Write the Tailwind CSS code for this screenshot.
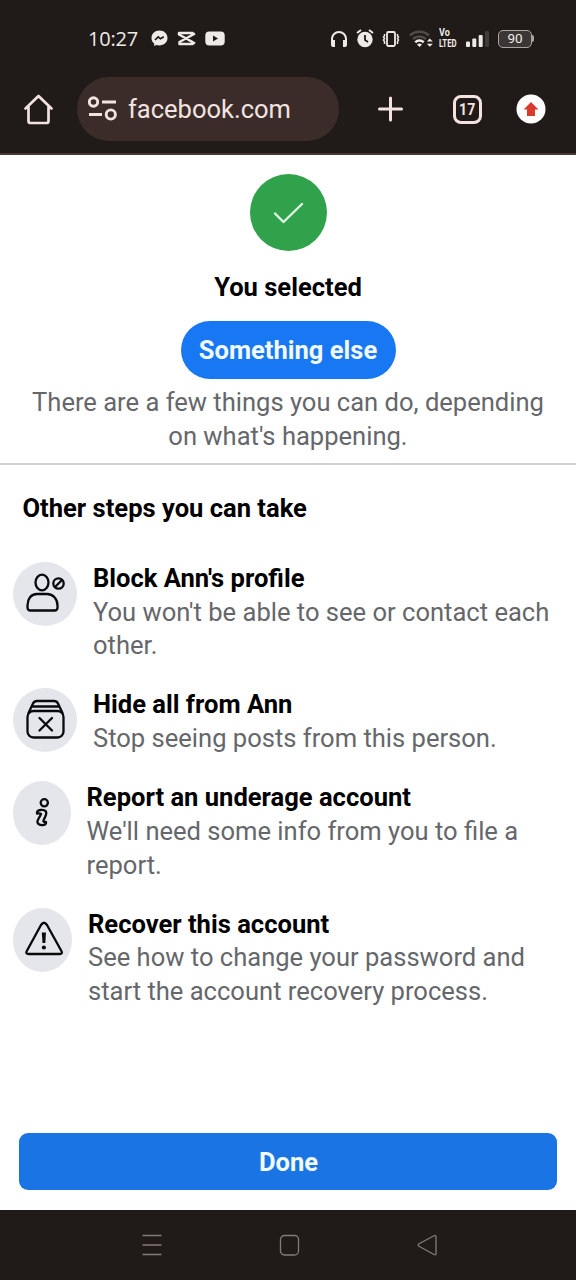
<!DOCTYPE html>
<html lang="en">
<head>
<meta charset="utf-8">
<meta name="viewport" content="width=device-width, initial-scale=1">
<title>facebook.com</title>
<script src="https://cdn.jsdelivr.net/npm/@tailwindcss/browser@4"></script>
</head>
<body class="w-[576px] h-[1280px] overflow-hidden bg-white font-['Roboto',sans-serif] flex flex-col whitespace-nowrap">
<header class="h-[155px] shrink-0 bg-[#201b18] border-b-2 border-[#443836] flex flex-col">
  <!-- Status bar -->
  <div class="h-[77px] shrink-0 flex items-center text-[#eeeae8] pl-[88px]">
    <span class="w-[63px] font-['Open_Sans'] text-[20px] leading-6 tracking-[-0.2px]">10:27</span>
    <svg class="w-[17px] h-[17px]" viewBox="0 0 17 17"><path d="M8.500.5C3.800.5.5 3.800.5 8c0 2.400 1 4.300 2.700 5.600V16l2.300-1c5.800 1.700 11-1.900 11-7C16.500 3.800 13.200.5 8.500.5Z" fill="currentColor"/><path d="m4 10 3.200-3.200 2.300 2 3.300-2" fill="none" stroke="#201b18" stroke-width="1.700"/></svg>
    <svg class="ml-[9px] w-[19px] h-[15px]" viewBox="0 0 19 15" fill="none" stroke="currentColor" stroke-width="2.500"><path d="M18 2.500 2.500 11v2h13v-2L2 3.500V2h13.500v1.500M18 12.500 10 8" stroke-linejoin="round"/></svg>
    <svg class="ml-[9px] w-[20px] h-[15px]" viewBox="0 0 20 15"><rect x=".3" y=".5" width="19.400" height="14" rx="4" fill="currentColor"/><path d="m8 4.600 5 2.900-5 2.900Z" fill="#201b18"/></svg>
    <svg class="ml-[105px] w-[18px] h-[18px]" viewBox="0 0 18 18"><path d="M2 13V9a7 7 0 0 1 14 0v4" fill="none" stroke="currentColor" stroke-width="2"/><path d="M1 10h4v7H3a2 2 0 0 1-2-2ZM13 10h4v5a2 2 0 0 1-2 2h-2Z" fill="currentColor"/></svg>
    <svg class="ml-[8px] w-[18px] h-[19px]" viewBox="0 0 18 19" fill="none" stroke="currentColor"><circle cx="9" cy="10.500" r="7.700" fill="currentColor" stroke="none"/><path d="m1 4 4-3M17 4l-4-3" stroke-width="2"/><path d="M9 6v5l3 2" stroke="#201b18" stroke-width="1.800"/></svg>
    <svg class="ml-[8px] w-[18px] h-[18px]" viewBox="0 0 18 18" fill="none" stroke="currentColor" stroke-width="1.800"><rect x="5" y="2" width="8" height="14" rx="1.500"/><path d="M2.500 4v2l-1 1 1 1.500-1 1.500 1 1.500v2.500M15.500 4v2l1 1-1 1.500 1 1.500-1 1.500v2.500" stroke-width="1.500"/></svg>
    <svg class="ml-[9px] w-[24px] h-[18px]" viewBox="0 0 24 18" fill="none" stroke-width="2.500"><path d="M1 5.500a14 14 0 0 1 19 0M4 9a9.600 9.600 0 0 1 13 0" stroke="#514b48"/><path d="M6.300 12.300a6 6 0 0 1 8.400 0" stroke="currentColor"/><path d="m8 14.500 2.500 2.500 2.500-2.500a4 4 0 0 0-5 0ZM17.800 11.500l3-3 3 3ZM17.800 13.800h6l-3 3Z" fill="currentColor"/></svg>
    <div class="ml-[6px] w-[20px] h-[20px] font-bold text-[10px] leading-[10px]"><div class="w-[12px] -mt-[1px] origin-left scale-x-[0.900]">Vo</div><div class="mt-[1px] w-[24px] origin-left scale-x-[0.780]">LTED</div></div>
    <svg class="ml-[7px] w-[24px] h-[18px]" viewBox="0 0 24 18" fill="currentColor"><rect x="0" y="11.500" width="4" height="5.500" rx="1"/><rect x="6.300" y="8.500" width="4" height="8.500" rx="1"/><rect x="12.700" y="5" width="4" height="12" rx="1"/><rect x="19" y="1" width="4" height="16" rx="1" fill="#423c39"/></svg>
    <div class="ml-[8px] w-[34px] h-[18px] rounded-[5px] border-[1.500px] border-[#aaa3a2] bg-[#3c3635] flex items-center justify-center text-[13.500px]">90</div>
    <i class="w-[2px] h-[7px] bg-[#aaa3a2] rounded-r"></i>
  </div>
  <!-- Browser toolbar -->
  <div class="h-[64px] flex items-center text-[#f3e3e0]">
    <svg class="ml-[23px] w-[31px] h-[32px]" viewBox="0 0 31 32" fill="none" stroke="currentColor" stroke-width="2.700" stroke-linecap="round" stroke-linejoin="round"><path d="M2.500 15.500 15.500 3 28.500 15.500M5.500 13.500V28q0 2 2 2h16q2 0 2-2V13.500"/></svg>
    <div class="ml-[23px] w-[262px] h-[64px] rounded-full bg-[#3b2c2a] flex items-center">
      <svg class="ml-[11px] w-[30px] h-[26px]" viewBox="0 0 30 26" fill="none" stroke="currentColor" stroke-width="2.900"><circle cx="5.500" cy="6" r="4.200"/><path d="M14 6h14M1 18.500h13"/><circle cx="22.800" cy="18.500" r="4.600"/></svg>
      <span class="ml-[10px] text-[25.500px]">facebook.com</span>
    </div>
    <svg class="ml-[38px] w-[27px] h-[27px]" viewBox="0 0 27 27" stroke="currentColor" stroke-width="3" stroke-linecap="round"><path d="M2.500 13h22M13.500 2v22"/></svg>
    <div class="ml-[49px] w-[29px] h-[29px] rounded-[8px] border-[3px] border-current flex items-center justify-center font-bold text-[16px]"><span class="block leading-[18px] pt-[1px] scale-x-[0.880]">17</span></div>
    <svg class="ml-[34px] w-[30px] h-[30px]" viewBox="0 0 30 30"><circle cx="15" cy="15" r="14.500" fill="#fff"/><path d="M15 8 22.500 15.500H19V22h-8v-6.500H7.500Z" fill="#d93a2e"/></svg>
  </div>
</header>
<main class="flex-1 min-h-0 flex flex-col">
  <section class="h-[310px] shrink-0 border-b-2 border-[#d0d1d3] flex flex-col items-center">
    <div class="mt-[19px] w-[77px] h-[77px] shrink-0 rounded-full bg-[#31a24c] flex items-center justify-center">
      <svg class="w-[32px] h-[24px]" viewBox="0 0 32 24" fill="none" stroke="#e4ffe9" stroke-width="2.300" stroke-linecap="round" stroke-linejoin="round"><path d="m3 12.500 8.500 8.500L30 3"/></svg>
    </div>
    <h1 class="mt-[19px] font-bold text-[25.550px] leading-[34px]">You selected</h1>
    <div class="mt-[17px] w-[215px] h-[58px] shrink-0 rounded-full bg-[#1877f2] text-[#f0faff] font-bold text-[25.550px] flex items-center justify-center">Something else</div>
    <p class="mt-[6px] text-center text-[#65676b] text-[25.550px] leading-[34px]">There are a few things you can do, depending<br>on what's happening.</p>
  </section>
  <section class="flex flex-col text-[25.550px] leading-[33.800px]">
    <h2 class="mt-[27px] ml-[22.500px] font-bold">Other steps you can take</h2>
    <div class="mt-[36px] ml-[13px] flex">
      <div class="w-[64px] h-[64px] rounded-full bg-[#e4e6eb] shrink-0">
        <svg class="w-[64px] h-[64px]" viewBox="0 0 64 64" fill="none" stroke="#080a0d" stroke-width="2.300"><ellipse cx="29" cy="20.500" rx="6.500" ry="7.800"/><path d="M24 32h10c6 0 10.500 5 10.500 11.500v2q0 3-3 3h-24q-3 0-3-3v-2C14.500 37 18 32 24 32Z"/><circle cx="45.500" cy="21.500" r="5.200"/><path d="m42 25 7-7"/></svg>
      </div>
      <div class="ml-[16px]"><h3 class="font-bold text-black">Block Ann's profile</h3><p class="text-[#65676b]">You won't be able to see or contact each<br>other.</p></div>
    </div>
    <div class="mt-[25px] ml-[13px] flex">
      <div class="w-[64px] h-[64px] rounded-full bg-[#e4e6eb] shrink-0">
        <svg class="w-[64px] h-[64px]" viewBox="0 0 64 64" fill="none" stroke="#080a0d" stroke-width="2.300" stroke-linejoin="round" stroke-linecap="round"><rect x="14.500" y="23" width="36" height="26.500" rx="6"/><path d="M15.500 25 20 15.500q1.200-2.500 4-2.500h17q2.800 0 4 2.500L49.500 25M18.500 18.500h28"/><path d="m26.500 30 12.500 12.500M39 30 26.500 42.500"/></svg>
      </div>
      <div class="ml-[16px]"><h3 class="font-bold text-black">Hide all from Ann</h3><p class="text-[#65676b]">Stop seeing posts from this person.</p></div>
    </div>
    <div class="mt-[25.500px] ml-[13px] flex">
      <div class="w-[58px] h-[64px] rounded-[50%] bg-[#e4e6eb] shrink-0">
        <svg class="w-[58px] h-[64px]" viewBox="0 0 58 64" fill="none" stroke="#080a0d" stroke-width="2.300" stroke-linejoin="round"><circle cx="31.300" cy="21.800" r="3.600"/><path d="M24 32.500q-.5-3 3.500-3.500c5-.5 7 1.500 5 6l-2 4.500q-.7 2 2.500 1.500c1 4-7.500 4-8.500.5-.8-2.500 3-6.500 3.500-8.500q-1-.8-4-.5Z"/></svg>
      </div>
      <div class="ml-[15.500px]"><h3 class="font-bold text-black">Report an underage account</h3><p class="text-[#65676b]">We'll need some info from you to file a<br>report.</p></div>
    </div>
    <div class="mt-[25px] ml-[13px] flex">
      <div class="w-[59px] h-[64px] rounded-[50%] bg-[#e4e6eb] shrink-0">
        <svg class="w-[59px] h-[64px]" viewBox="0 0 59 64" fill="none" stroke="#080a0d" stroke-width="2.300" stroke-linejoin="round"><path d="m28 17-14.200 26q-1.500 3 1.700 3h31.200q3.200 0 1.700-3l-14.400-26q-3-4.500-6 0Z"/><path d="M28.800 24.500h4.200l-.7 10.500h-2.800Z" fill="#080a0d" stroke="none"/><circle cx="30.900" cy="39.500" r="2.100" fill="#080a0d" stroke="none"/></svg>
      </div>
      <div class="ml-[16px]"><h3 class="font-bold text-black">Recover this account</h3><p class="text-[#65676b]">See how to change your password and<br>start the account recovery process.</p></div>
    </div>
  </section>
  <button class="mt-auto mb-[20px] ml-[19px] w-[538px] h-[57px] shrink-0 rounded-[9px] bg-[#1b74e4] text-[#f0faff] font-bold text-[25.550px] pt-[2px] pl-[1px]">Done</button>
</main>
<nav class="h-[70px] shrink-0 bg-[#201b18] text-[#827c79] flex items-center">
  <svg class="ml-[141px] w-[22px] h-[22px]" viewBox="0 0 22 22" stroke="currentColor" stroke-width="1.500"><path d="M1.500 1.500h19M1.500 11h19M1.500 20.500h19"/></svg>
  <svg class="ml-[116px] w-[22px] h-[22px]" viewBox="0 0 22 22" fill="none" stroke="currentColor" stroke-width="1.300"><rect x="1.500" y="1.500" width="18" height="19.500" rx="4"/></svg>
  <svg class="ml-[116px] w-[21px] h-[22px]" viewBox="0 0 21 22" fill="none" stroke="currentColor" stroke-width="1.300" stroke-linejoin="round"><path d="M2 9.800 17 1.700q2-.7 2 1.300v16.500q0 2-2 1L2 12.300q-1.500-1.200 0-2.500Z"/></svg>
</nav>
</body>
</html>
